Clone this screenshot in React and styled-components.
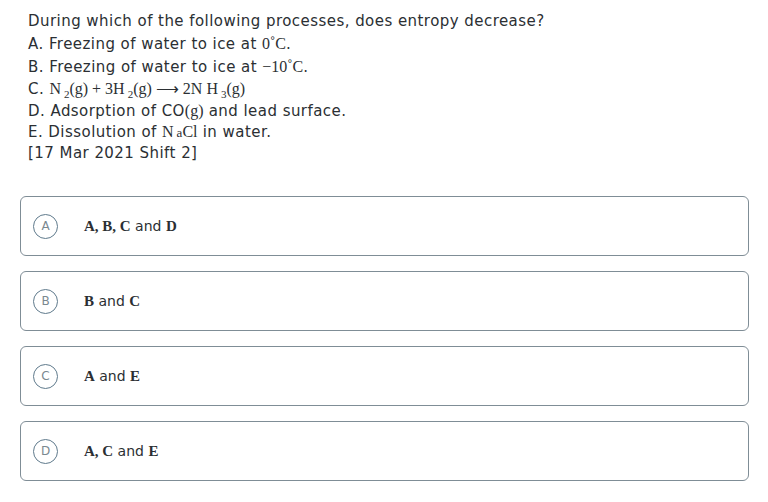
import styled, { createGlobalStyle } from "styled-components";

const Global = createGlobalStyle`
  body {
    margin: 0;
    background: #fff;
    font-family: "DejaVu Sans", "Open Sans", sans-serif;
    color: #2b2f33;
  }
`;

const Page = styled.div`
  padding: 10px 19px 0 20px;
`;

const Question = styled.div`
  padding-left: 8px;
  font-size: 15px;
  letter-spacing: 0.45px;
  line-height: 22px;
`;

const Line = styled.div`
  height: ${(p) => p.h || 22}px;
`;

const M = styled.span`
  font-family: "Liberation Serif", serif;
  font-size: 16px;
  letter-spacing: 0;
`;

const Sub = styled.sub`
  font-size: 11px;
  vertical-align: -4px;
  line-height: 0;
  margin-left: 3px;
`;

const Small = styled.span`
  font-size: 13px;
  margin-left: 3px;
`;

const Options = styled.div`
  margin-top: 33px;
  display: flex;
  flex-direction: column;
  gap: 15px;
`;

const Option = styled.div`
  height: 58px;
  border: 1px solid #7f8d96;
  border-radius: 6px;
  display: flex;
  align-items: center;
  padding-left: 12px;
`;

const Bubble = styled.div`
  width: 23px;
  height: 23px;
  border: 1px solid #5f7a8c;
  border-radius: 50%;
  display: flex;
  align-items: center;
  justify-content: center;
  font-size: 12px;
  color: #7a8890;
  margin-right: 26px;
`;

const Label = styled.div`
  font-size: 14px;
  color: #2b2f33;
`;

const S = styled.span`
  font-family: "Liberation Serif", serif;
  font-weight: bold;
  font-size: 15px;
`;

const opts = [
  ["A", <><S>A, B, C</S> and <S>D</S></>],
  ["B", <><S>B</S> and <S>C</S></>],
  ["C", <><S>A</S> and <S>E</S></>],
  ["D", <><S>A, C</S> and <S>E</S></>],
];

export default function App() {
  return (
    <Page>
      <Global />
      <Question>
        <Line h={23}>During which of the following processes, does entropy decrease?</Line>
        <Line h={23}>A. Freezing of water to ice at <M>0˚C</M>.</Line>
        <Line h={22}>B. Freezing of water to ice at <M>−10˚C</M>.</Line>
        <Line h={22}>
          C. <M>N<Sub>2</Sub>(g) + 3H<Sub>2</Sub>(g) ⟶ 2N H<Sub>3</Sub>(g)</M>
        </Line>
        <Line h={21}>D. Adsorption of CO<M>(g)</M> and lead surface.</Line>
        <Line h={21}>E. Dissolution of <M>N<Small>a</Small>Cl</M> in water.</Line>
        <Line h={21}>[17 Mar 2021 Shift 2]</Line>
      </Question>
      <Options>
        {opts.map(([k, t]) => (
          <Option key={k}>
            <Bubble>{k}</Bubble>
            <Label>{t}</Label>
          </Option>
        ))}
      </Options>
    </Page>
  );
}
